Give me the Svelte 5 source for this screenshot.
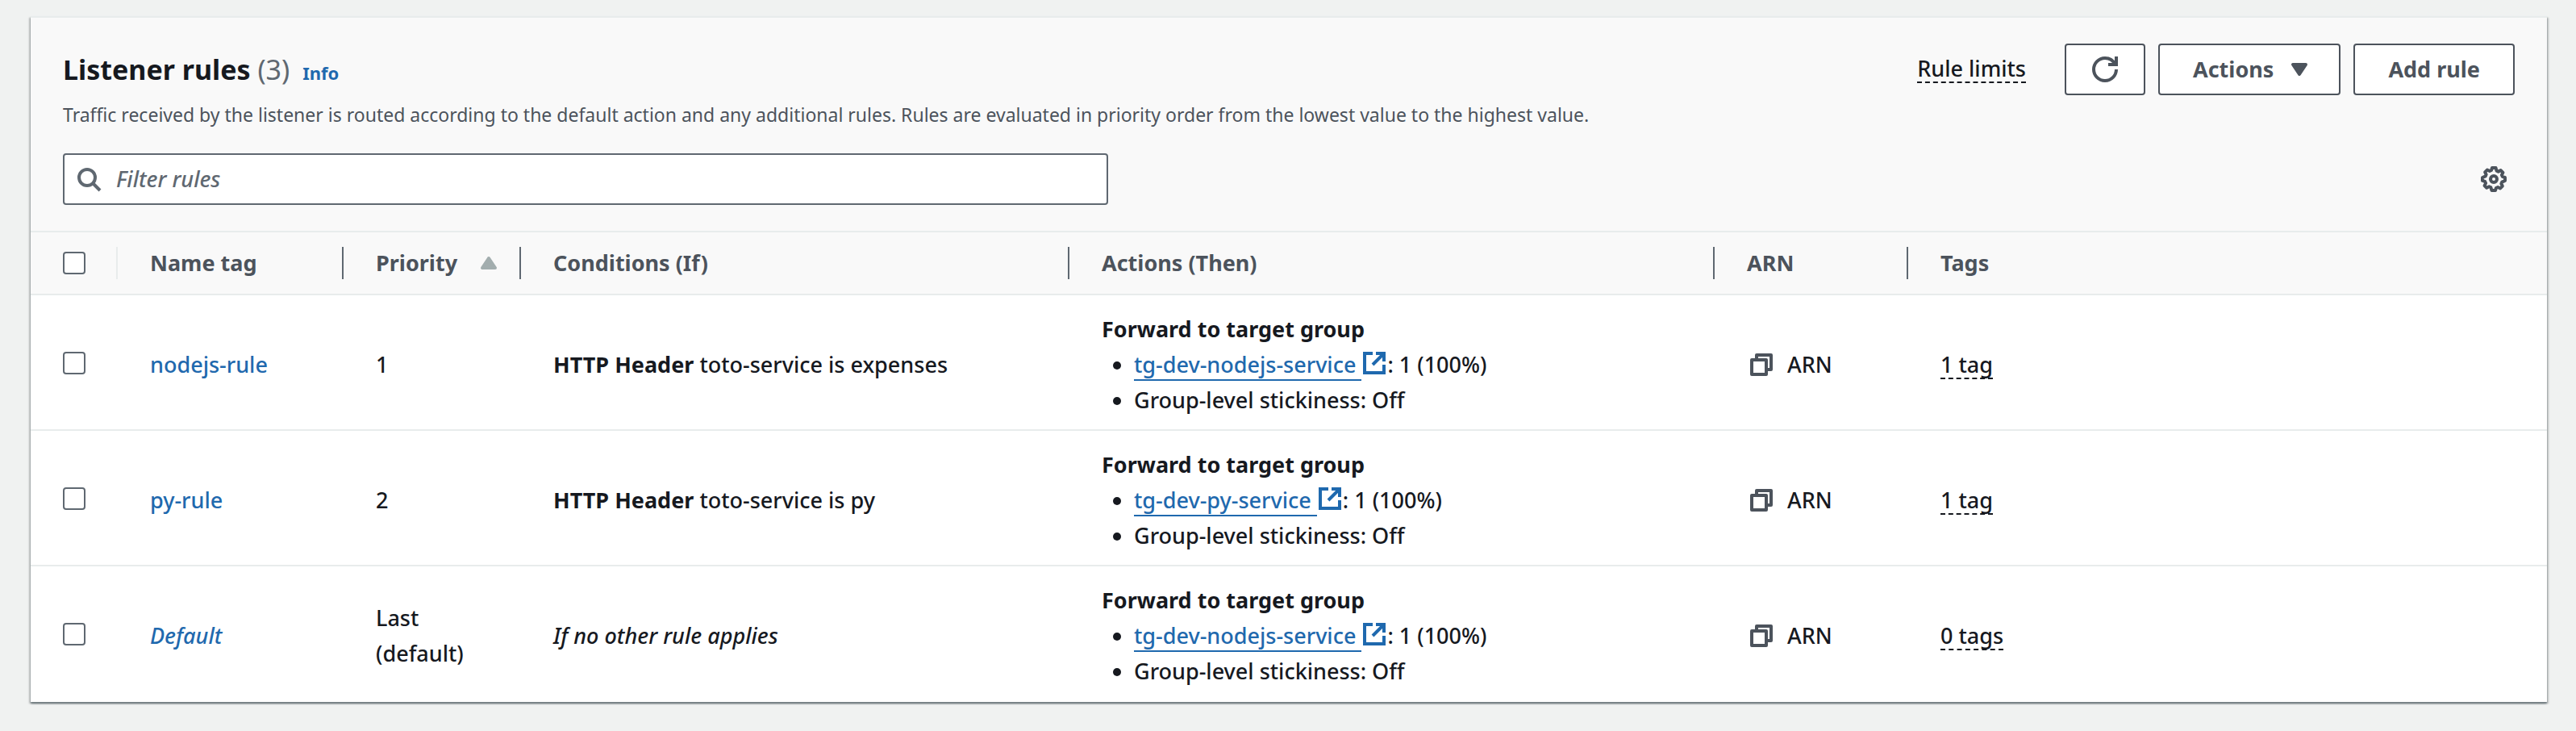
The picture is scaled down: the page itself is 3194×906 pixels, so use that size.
<script>
  const rules = [
    { name: 'nodejs-rule', priority: '1', header: 'HTTP Header', condition: 'toto-service is expenses', group: 'tg-dev-nodejs-service', tags: '1 tag' },
    { name: 'py-rule', priority: '2', header: 'HTTP Header', condition: 'toto-service is py', group: 'tg-dev-py-service', tags: '1 tag' },
    { name: 'Default', priority: 'Last (default)', isDefault: true, condition: 'If no other rule applies', group: 'tg-dev-nodejs-service', tags: '0 tags' },
  ];
  let query = $state('');
  let selected = $state([false, false, false]);
</script>

<main>
  <section class="card">
    <header>
      <div class="top">
        <div class="heading">
          <h2>Listener rules <span class="count">(3)</span></h2>
          <a class="info" href="#info">Info</a>
        </div>
        <div class="actions">
          <button class="hint limits">Rule limits</button>
          <button class="btn icon-only" aria-label="Refresh">
            <svg width="32" height="32" viewBox="0 0 16 16" fill="none" stroke="currentColor" stroke-width="2"><path d="M15 8c0 3.87-3.13 7-7 7s-7-3.13-7-7 3.13-7 7-7c2.79 0 5.2 1.63 6.33 4" /><path d="M10 5h5V0" /></svg>
          </button>
          <button class="btn">Actions
            <svg class="caret" width="32" height="32" viewBox="0 0 16 16"><path d="M4 5h8l-4 6z" fill="currentColor" stroke="currentColor" stroke-width="2" stroke-linejoin="round" /></svg>
          </button>
          <button class="btn">Add rule</button>
        </div>
      </div>
      <p>Traffic received by the listener is routed according to the default action and any additional rules. Rules are evaluated in priority order from the lowest value to the highest value.</p>
      <div class="tools">
        <label class="search">
          <svg width="32" height="32" viewBox="0 0 16 16" fill="none" stroke="currentColor" stroke-width="2"><circle cx="7" cy="7" r="5" /><path d="m15 15-4.5-4.5" /></svg>
          <input type="text" placeholder="Filter rules" aria-label="Filter rules" bind:value={query} />
        </label>
        <button class="gear" aria-label="Preferences">
          <svg width="32" height="32" viewBox="0 0 16 16" fill="none" stroke="currentColor" stroke-width="2" stroke-linejoin="round"><path d="M15 8.95V7.01l-1.6-.53c-.11-.36-.26-.71-.43-1.04l.75-1.51-1.37-1.37-1.51.75c-.33-.18-.68-.32-1.04-.43L9.27 1H7.03l-.53 1.6c-.36.11-.71.26-1.04.43l-1.51-.75-1.37 1.37.75 1.51c-.18.33-.32.68-.43 1.04L1 7.01v1.94l1.6.53c.11.36.26.71.43 1.04l-.75 1.51 1.37 1.37 1.51-.75c.33.18.68.32 1.04.43L6.73 15h2.24l.53-1.6c.36-.11.71-.26 1.04-.43l1.51.75 1.37-1.37-.75-1.51c.18-.33.32-.68.43-1.04z" /><circle cx="8" cy="8" r="2" /></svg>
        </button>
      </div>
    </header>

    <table>
      <colgroup><col class="c-check" /><col class="c-name" /><col class="c-priority" /><col class="c-if" /><col class="c-then" /><col class="c-arn" /><col /></colgroup>
      <thead>
        <tr>
          <th class="check light"><input type="checkbox" aria-label="Select all rules" /></th>
          <th>Name tag</th>
          <th><div class="sort">Priority <svg width="32" height="32" viewBox="0 0 16 16"><path d="M4 11h8L8 5z" fill="#a2adae" stroke="#a2adae" stroke-width="2" stroke-linejoin="round" /></svg></div></th>
          <th>Conditions (If)</th>
          <th>Actions (Then)</th>
          <th>ARN</th>
          <th>Tags</th>
        </tr>
      </thead>
      <tbody>
        {#each rules as rule, i}
          <tr>
            <td class="check"><input type="checkbox" aria-label={rule.name} bind:checked={selected[i]} /></td>
            <td><a href="#rule" class:italic={rule.isDefault}>{rule.name}</a></td>
            <td>{rule.priority}</td>
            <td class:italic={rule.isDefault}>{#if rule.header}<b>{rule.header}</b>{' '}{/if}{rule.condition}</td>
            <td>
              <b>Forward to target group</b>
              <ul>
                <li><a class="ext" href="#group"><span>{rule.group}&nbsp;</span><svg width="32" height="32" viewBox="0 0 16 16" fill="none" stroke="currentColor" stroke-width="2"><path d="M14 9v5H2V2h5" /><path d="M9 2h5v5M7 9l7-7" /></svg></a>: 1 (100%)</li>
                <li>Group-level stickiness: Off</li>
              </ul>
            </td>
            <td>
              <div class="arn">
                <button class="copy" aria-label="Copy ARN"><svg width="32" height="32" viewBox="0 0 16 16" fill="none" stroke="currentColor" stroke-width="2" stroke-linejoin="round"><path d="M2 5h9v9H2z" /><path d="M5 5V2h9v9h-3" /></svg></button>
                <span>ARN</span>
              </div>
            </td>
            <td><button class="hint">{rule.tags}</button></td>
          </tr>
        {/each}
      </tbody>
    </table>
  </section>
</main>

<style>
  :global(body) { background: #f0f2f1; }
  main {
    padding: 20px 36px 36px 38px;
    font: 500 27px/44px "Noto Sans", "Open Sans", sans-serif;
    color: #16191f;
  }
  button, input { font: inherit; color: inherit; margin: 0; }
  button { cursor: pointer; }
  svg { display: block; flex: none; }
  a { color: #1f69ae; text-decoration: none; }
  .card {
    background: #fff;
    border-top: 2px solid #e8ecec;
    box-shadow: 0 2px 2px #6f7c80, 2px 2px 2px #00000030, -2px 2px 2px #00000030;
  }
  header {
    background: #f9f9f9;
    border-bottom: 2px solid #e8ecec;
    padding: 32px 40px;
  }
  .top, .actions, .heading, .tools, .arn, .sort { display: flex; align-items: center; }
  .top, .tools { justify-content: space-between; }
  .heading { align-items: baseline; gap: 16px; }
  h2 { margin: 0; font-size: 34px; line-height: 64px; font-weight: 700; }
  .count { font-weight: 400; color: #5f6871; }
  .info { font-size: 22px; font-weight: 700; }
  .actions { gap: 16px; }
  .btn {
    box-sizing: border-box;
    height: 64px;
    display: flex;
    align-items: center;
    gap: 16px;
    padding: 0 41px;
    border: 2px solid #4c535c;
    border-radius: 4px;
    background: #fff;
    color: #4c535c;
    font-weight: 700;
  }
  .icon-only { padding: 0 32px; }
  .caret { margin-right: -8px; }
  .hint {
    padding: 0;
    border: 0;
    border-bottom: 2px dashed #16191f;
    background: none;
    line-height: 32px;
  }
  .limits { margin-right: 32px; }
  p { margin: 4px 0 28px; font-size: 23px; font-weight: 450; line-height: 40px; color: #4c535c; }
  .search {
    box-sizing: border-box;
    display: flex;
    align-items: center;
    gap: 18px;
    width: 1296px;
    max-width: 100%;
    height: 64px;
    padding: 0 14px;
    border: 2px solid #5f6871;
    border-radius: 4px;
    background: #fff;
    color: #5f6871;
  }
  .search input { flex: 1; min-width: 0; padding: 0; border: 0; outline: 0; background: none; }
  .search input::placeholder { color: #5f6871; font-style: italic; opacity: 1; }
  .gear, .copy { padding: 0; border: 0; background: none; color: #4c535c; }
  .gear { margin-right: 10px; }
  table { width: 100%; table-layout: fixed; border-collapse: separate; border-spacing: 0; }
  .c-check { width: 108px; }
  .c-name { width: 280px; }
  .c-priority { width: 220px; }
  .c-if { width: 680px; }
  .c-then { width: 800px; }
  .c-arn { width: 240px; }
  th {
    height: 76px;
    padding: 0 0 0 40px;
    background: linear-gradient(#5f6871, #5f6871) right center / 2px 40px no-repeat #f9f9f9;
    border-bottom: 2px solid #e8ecec;
    text-align: left;
    color: #4c535c;
  }
  th.light { background-image: linear-gradient(#e8ecec, #e8ecec); }
  th:last-child { background-image: none; }
  .sort { justify-content: space-between; padding-right: 24px; }
  td { padding: 20px 40px 14px; border-bottom: 2px solid #e8ecec; vertical-align: middle; }
  tbody tr:last-child td { border-bottom-color: transparent; }
  td.check { padding: 18px 0 16px 40px; }
  input[type="checkbox"] {
    box-sizing: border-box;
    display: block;
    appearance: none;
    width: 28px;
    height: 28px;
    border: 2px solid #5f6871;
    border-radius: 4px;
    background: #fff;
  }
  .italic { font-style: italic; }
  ul { margin: 0; padding-left: 40px; }
  .ext span { border-bottom: 2px solid; }
  .ext svg { display: inline-block; vertical-align: -4px; }
  .arn { gap: 16px; }
  .copy { margin-left: 2px; }
</style>
